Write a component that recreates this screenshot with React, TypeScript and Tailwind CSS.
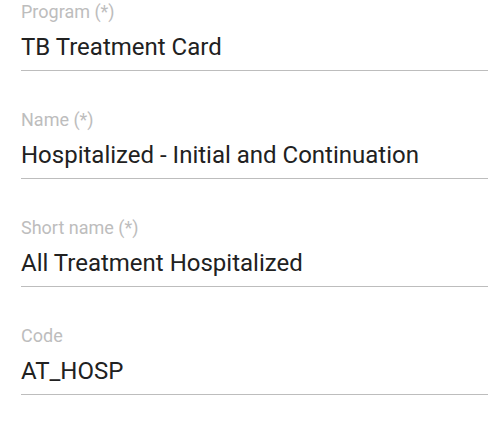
export default function App() {
  const fields = [
    { label: "Program (*)", value: "TB Treatment Card" },
    { label: "Name (*)", value: "Hospitalized - Initial and Continuation" },
    { label: "Short name (*)", value: "All Treatment Hospitalized" },
    { label: "Code", value: "AT_HOSP" },
  ];

  return (
    <div className="w-[488px] h-[424px] bg-white pl-[21px] pt-[2px] font-['Roboto',sans-serif] overflow-hidden">
      {fields.map((f) => (
        <div key={f.label} className="mb-[39px]">
          <div className="text-[18px] leading-[20px] text-[#bdbdbd]">{f.label}</div>
          <div className="mt-[9px] pb-[7px] border-b border-[#bdbdbd] text-[24px] leading-[32px] text-[#212121]">
            {f.value}
          </div>
        </div>
      ))}
    </div>
  );
}
